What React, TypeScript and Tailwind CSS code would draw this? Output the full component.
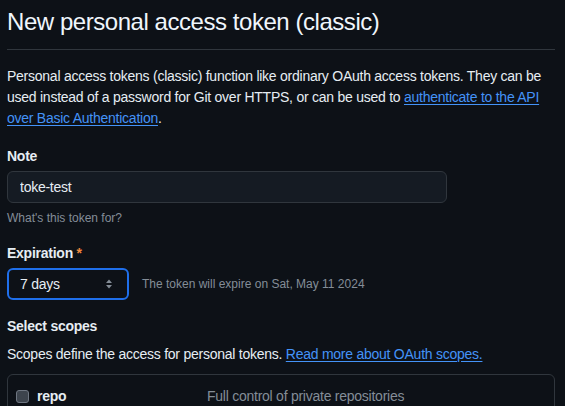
import { ChangeEvent, useState } from 'react';

export default function App() {
    const [note, setNote] = useState<string>('toke-test');
    const [expiration, setExpiration] = useState<string>('7');

    return (
        <div className="min-h-[406px] w-[565px] overflow-hidden bg-[#0d1117] text-[#e6edf3] font-['Liberation_Sans',Arial,sans-serif] tracking-[-0.25px]">
            <div className="w-[548px] pl-[7px] pt-[7px] box-content">
                {/* Page header */}
                <div className="border-b border-[#30363d] pb-[12px]">
                    <h2 className="text-[24px] leading-[30px] font-normal tracking-[-0.45px] text-[#f0f6fc]">
                        New personal access token (classic)
                    </h2>
                </div>

                <p className="mt-[16px] text-[14px] leading-[21px]">
                    Personal access tokens (classic) function like ordinary OAuth access tokens. They can be
                    used instead of a password for Git over HTTPS, or can be used to{' '}
                    <a href="#" className="text-[#4493f8] underline underline-offset-[2px]">
                        authenticate to the API
                    </a>{' '}
                    <a href="#" className="text-[#4493f8] underline underline-offset-[2px]">
                        over Basic Authentication
                    </a>
                    .
                </p>

                {/* Note */}
                <div className="mt-[17px]">
                    <label className="block text-[14px] leading-[21px] font-bold">Note</label>
                    <input
                        type="text"
                        value={note}
                        onChange={(e: ChangeEvent<HTMLInputElement>) => setNote(e.target.value)}
                        className="mt-[4px] block h-[32px] w-[440px] rounded-[6px] border border-[#30363d] bg-[#151b23] px-[12px] text-[14px] text-[#e6edf3] outline-none"
                    />
                    <p className="mt-[6px] text-[12px] leading-[18px] tracking-normal text-[#848d97]">What's this token for?</p>
                </div>

                {/* Expiration */}
                <div className="mt-[16px]">
                    <label className="block text-[14px] leading-[21px] font-bold">
                        Expiration <span className="text-[#f0883e]">*</span>
                    </label>
                    <div className="mt-[4px] flex items-center gap-[13px]">
                        <div className="relative">
                            <select
                                value={expiration}
                                onChange={(e) => setExpiration(e.target.value)}
                                className="block h-[32px] w-[122px] appearance-none rounded-[6px] border-2 border-[#1f6feb] bg-[#0d1117] pl-[11px] pr-[24px] text-[14px] text-[#e6edf3] outline-none"
                            >
                                <option value="7">7 days</option>
                                <option value="30">30 days</option>
                                <option value="60">60 days</option>
                                <option value="90">90 days</option>
                            </select>
                            <svg
                                viewBox="0 0 8 12"
                                className="pointer-events-none absolute right-[16px] top-[10px] h-[12px] w-[8px] fill-[#848d97]"
                            >
                                <path d="M4 1.5 7 5H1z" />
                                <path d="M4 10.5 1 7h6z" />
                            </svg>
                        </div>
                        <span className="text-[12px] tracking-normal text-[#848d97]">The token will expire on Sat, May 11 2024</span>
                    </div>
                </div>

                {/* Scopes */}
                <div className="mt-[16px]">
                    <h3 className="text-[14px] leading-[21px] font-bold">Select scopes</h3>
                    <p className="mt-[7px] text-[14px] leading-[21px]">
                        Scopes define the access for personal tokens.{' '}
                        <a href="#" className="text-[#4493f8] underline underline-offset-[2px]">
                            Read more about OAuth scopes.
                        </a>
                    </p>
                    <div className="mt-[9px] rounded-[6px] border border-[#30363d] px-[8px] pt-[11px] pb-[12px]">
                        <div className="flex items-center">
                            <span className="h-[13px] w-[13px] rounded-[3px] border border-[#6e7681] bg-[#3d444d]" />
                            <span className="ml-[8px] w-[170px] text-[14px] font-bold">repo</span>
                            <span className="text-[14px] text-[#848d97]">Full control of private repositories</span>
                        </div>
                    </div>
                </div>
            </div>
        </div>
    );
}
